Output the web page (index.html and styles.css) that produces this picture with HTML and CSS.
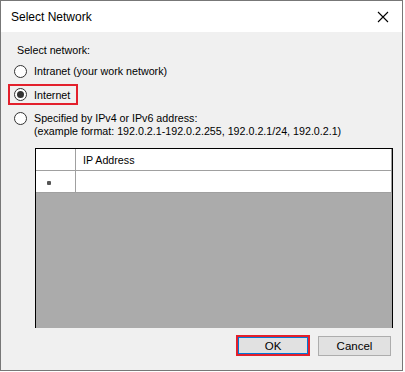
FILE: index.html
```html
<!DOCTYPE html>
<html lang="en">
<head>
    <meta charset="UTF-8">
    <title>Select Network</title>
    <link rel="stylesheet" href="styles.css">
</head>
<body>
    <div class="dialog">
        <div class="title-bar">
            <span class="title">Select Network</span>
            <svg class="close" width="12" height="12" viewBox="0 0 12 12">
                <path d="M1 1 L11 11 M11 1 L1 11" stroke="#000" stroke-width="1.1" fill="none"/>
            </svg>
        </div>

        <div class="content">
            <div class="section-label">Select network:</div>

            <label class="option">
                <span class="radio"></span>
                <span>Intranet (your work network)</span>
            </label>

            <label class="option option-marked">
                <span class="radio checked"></span>
                <span>Internet</span>
            </label>

            <label class="option option-multi">
                <span class="radio"></span>
                <span class="option-text">
                    Specified by IPv4 or IPv6 address:<br>
                    (example format: 192.0.2.1-192.0.2.255, 192.0.2.1/24, 192.0.2.1)
                </span>
            </label>

            <div class="grid">
                <div class="grid-row">
                    <div class="row-head"></div>
                    <div class="cell header-cell">IP Address</div>
                </div>
                <div class="grid-row">
                    <div class="row-head"><span class="new-row-mark"></span></div>
                    <div class="cell"></div>
                </div>
            </div>

            <div class="buttons">
                <button class="btn btn-ok">OK</button>
                <button class="btn">Cancel</button>
            </div>
        </div>
    </div>
</body>
</html>
```

FILE: styles.css
```css
:root {
    --face: #f0f0f0;
    --frame: #777777;
    --mark: #e3202c;
    --grid-line: #a0a0a0;
    --grid-empty: #ababab;
}

body {
    margin: 0;
    background: #ffffff;
    font-family: "Liberation Sans", Arial, sans-serif;
    font-size: 10.7px;
    color: #000;
}

.dialog {
    width: 401px;
    height: 369px;
    border: 1px solid var(--frame);
    display: flex;
    flex-direction: column;
}

.title-bar {
    height: 31px;
    background: #ffffff;
    display: flex;
    align-items: center;
    justify-content: space-between;
    padding: 0 13px 0 10px;
    font-size: 12px;
}

.title {
    padding-top: 1px;
}

.content {
    flex: 1;
    background: var(--face);
    padding: 0 11px 0 7px;
    display: flex;
    flex-direction: column;
}

.section-label {
    margin: 11px 0 0 9px;
    line-height: 14px;
}

.option {
    display: flex;
    align-items: center;
    gap: 7px;
    line-height: 14px;
    margin-left: 6px;
}

.option:first-of-type {
    margin-top: 7px;
}

.option-marked {
    align-self: flex-start;
    margin: 6px 0 0 0;
    height: 17px;
    padding: 0 6px 0 4px;
    border: 2px solid var(--mark);
}

.option-multi {
    align-items: flex-start;
    margin-top: 7px;
    line-height: 13px;
}

.radio {
    width: 11px;
    height: 11px;
    border: 1px solid #333;
    border-radius: 50%;
    background: #fff;
    display: flex;
    align-items: center;
    justify-content: center;
    flex-shrink: 0;
}

.radio.checked::after {
    content: "";
    width: 7px;
    height: 7px;
    border-radius: 50%;
    background: #333;
}

.grid {
    margin: 10px 0 0 27px;
    width: 356px;
    height: 179px;
    border: 1px solid #000;
    border-bottom: none;
    background: var(--grid-empty);
}

.grid-row {
    display: flex;
    height: 21px;
    background: #fff;
    border-bottom: 1px solid var(--grid-line);
}

.row-head {
    width: 40px;
    border-right: 1px solid var(--grid-line);
    display: flex;
    align-items: center;
    padding-left: 11px;
    box-sizing: border-box;
}

.new-row-mark {
    width: 4px;
    height: 4px;
    border-radius: 1px;
    background: #555;
    margin-top: 2px;
}

.cell {
    flex: 1;
    border-right: 1px solid var(--grid-line);
}

.header-cell {
    display: flex;
    align-items: center;
    padding-left: 7px;
}

.buttons {
    display: flex;
    justify-content: flex-end;
    align-items: center;
    gap: 8px;
    margin-top: 7px;
}

.btn {
    width: 73px;
    height: 20px;
    background: #e1e1e1;
    border: 1px solid #adadad;
    font-family: inherit;
    font-size: 11.5px;
    padding: 0;
}

.btn-ok {
    width: 74px;
    height: 21px;
    border: 2px solid var(--mark);
    box-shadow: inset 0 0 0 1px #0078d7;
}
```
